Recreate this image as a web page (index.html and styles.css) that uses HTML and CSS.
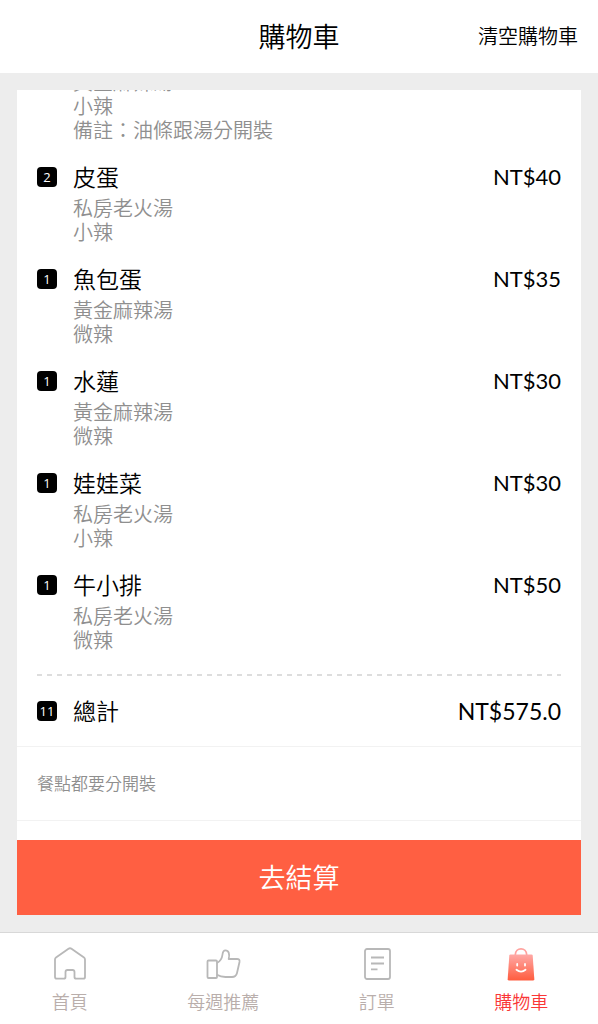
FILE: index.html
```html
<!DOCTYPE html>
<html lang="zh-Hant">
<head>
    <meta charset="UTF-8">
    <meta name="viewport" content="width=device-width, initial-scale=1.0">
    <title>購物車</title>
    <link rel="stylesheet" href="styles.css">
</head>
<body>
    <header class="header">
        <h1>購物車</h1>
        <button class="clear-btn" type="button">清空購物車</button>
    </header>

    <main class="main">
        <div class="cart">
            <!-- list stays at its end, older items are cut off on top -->
            <div class="cart-scroll">
                <ul class="items">
                    <li class="item">
                        <p class="detail">黃金麻辣湯</p>
                        <p class="detail">小辣</p>
                        <p class="detail">備註：油條跟湯分開裝</p>
                    </li>
                    <li class="item">
                        <div class="row">
                            <span class="count">2</span>
                            <h2>皮蛋</h2>
                            <span class="price">NT$40</span>
                        </div>
                        <p class="detail">私房老火湯</p>
                        <p class="detail">小辣</p>
                    </li>
                    <li class="item">
                        <div class="row">
                            <span class="count">1</span>
                            <h2>魚包蛋</h2>
                            <span class="price">NT$35</span>
                        </div>
                        <p class="detail">黃金麻辣湯</p>
                        <p class="detail">微辣</p>
                    </li>
                    <li class="item">
                        <div class="row">
                            <span class="count">1</span>
                            <h2>水蓮</h2>
                            <span class="price">NT$30</span>
                        </div>
                        <p class="detail">黃金麻辣湯</p>
                        <p class="detail">微辣</p>
                    </li>
                    <li class="item">
                        <div class="row">
                            <span class="count">1</span>
                            <h2>娃娃菜</h2>
                            <span class="price">NT$30</span>
                        </div>
                        <p class="detail">私房老火湯</p>
                        <p class="detail">小辣</p>
                    </li>
                    <li class="item">
                        <div class="row">
                            <span class="count">1</span>
                            <h2>牛小排</h2>
                            <span class="price">NT$50</span>
                        </div>
                        <p class="detail">私房老火湯</p>
                        <p class="detail">微辣</p>
                    </li>
                </ul>
                <div class="divider"></div>
                <div class="row total">
                    <span class="count">11</span>
                    <h2>總計</h2>
                    <span class="price">NT$575.0</span>
                </div>
                <p class="note">餐點都要分開裝</p>
            </div>
            <button class="checkout" type="button">去結算</button>
        </div>
    </main>

    <nav class="tabs">
        <a class="tab" href="#home">
            <svg width="36" height="36" viewBox="0 0 36 36">
                <path d="M3 13.500 Q3 12.300 4 11.600 L16.500 2.800 Q18 1.700 19.500 2.800 L32 11.600 Q33 12.300 33 13.500 V31 Q33 32.700 31.300 32.700 H24.200 Q22.500 32.700 22.500 31 V26 Q22.500 24 20.500 24 H15.500 Q13.500 24 13.500 26 V31 Q13.500 32.700 11.800 32.700 H4.700 Q3 32.700 3 31 Z"/>
            </svg>
            <span>首頁</span>
        </a>
        <a class="tab" href="#recommend">
            <svg width="36" height="36" viewBox="0 0 36 36">
                <rect x="2.500" y="14.500" width="9.500" height="17.500" rx="1"/>
                <path d="M12 17 C15 15.500 17 12.500 17.500 8.500 C17.800 5.500 18.800 4.300 20.500 4.300 C23.500 4.300 25 7.500 23.700 13 L32 12.800 Q35 12.800 34.500 16 L32 27 Q31 31 27 31 H20.500 Q15.500 31 12 28.800"/>
            </svg>
            <span>每週推薦</span>
        </a>
        <a class="tab" href="#orders">
            <svg width="36" height="36" viewBox="0 0 36 36">
                <rect x="6" y="3" width="25" height="30" rx="2"/>
                <path d="M12 11.500 H25 M12 17.500 H25 M12 23.300 H18.500"/>
            </svg>
            <span>訂單</span>
        </a>
        <a class="tab active" href="#cart">
            <svg width="36" height="36" viewBox="0 0 36 36">
                <defs>
                    <linearGradient id="bag" x1="0" y1="0" x2="0" y2="1">
                        <stop offset="0" stop-color="#ffa9a6"/>
                        <stop offset="1" stop-color="#ff5c3e"/>
                    </linearGradient>
                </defs>
                <path class="handle" d="M12.300 9 C12.300 0.800 23.700 0.800 23.700 9"/>
                <path class="bag" d="M7.500 8.500 H28.500 Q29.600 8.500 29.700 9.600 L31.300 33 Q31.400 34.600 29.900 34.600 H6.100 Q4.600 34.600 4.700 33 L6.300 9.600 Q6.400 8.500 7.500 8.500 Z"/>
                <path class="smile" d="M14.200 18 V19.500 M22 18 V19.500 M13.500 23.700 Q18 27.500 22.500 23.700"/>
            </svg>
            <span>購物車</span>
        </a>
    </nav>
</body>
</html>
```
FILE: styles.css
```css
* {
    box-sizing: border-box;
}
body {
    margin: 0;
    height: 100vh;
    display: flex;
    flex-direction: column;
    background: #ededed;
    color: #000;
    font-family: "Noto Sans CJK TC", sans-serif;
    font-weight: 350;
}
h1, h2, p, ul {
    margin: 0;
    padding: 0;
    font-weight: inherit;
}
button {
    border: none;
    padding: 0;
    font-family: inherit;
    font-weight: inherit;
    cursor: pointer;
}
.header {
    display: grid;
    grid-template-columns: 1fr auto 1fr;
    align-items: center;
    height: 73px;
    padding: 0 20px 2px;
    background: #fff;
}
.header h1 {
    grid-column: 2;
    font-size: 27px;
    line-height: 34px;
}
.clear-btn {
    justify-self: end;
    background: none;
    color: #000;
    font-size: 20px;
    line-height: 24px;
}
.main {
    flex: 1;
    min-height: 0;
    padding: 17px;
    display: flex;
}
.cart {
    flex: 1;
    display: flex;
    flex-direction: column;
    background: #fff;
}
.cart-scroll {
    flex: 1;
    min-height: 0;
    display: flex;
    flex-direction: column;
    justify-content: flex-end;
    overflow: hidden;
    padding-bottom: 19px;
}
.items {
    list-style: none;
    padding: 0 20px;
}
.item {
    padding-bottom: 17px;
}
.row {
    display: flex;
    align-items: center;
    margin-bottom: 1px;
    line-height: 36px;
}
.row h2 {
    flex: 1;
    padding-bottom: 2px;
    font-size: 23px;
    line-height: 34px;
}
.count {
    width: 20px;
    height: 20px;
    margin-right: 16px;
    border-radius: 4px;
    background: #000;
    color: #fff;
    font-family: "Open Sans", sans-serif;
    font-size: 13px;
    font-weight: 400;
    line-height: 20px;
    text-align: center;
}
.price {
    font-family: Lato, sans-serif;
    font-size: 22px;
    font-weight: 400;
}
.detail {
    padding-left: 36px;
    color: #8f8f8f;
    font-size: 20px;
    line-height: 24px;
}
.divider {
    flex: none;
    height: 2px;
    margin: 5px 20px 0;
    background: repeating-linear-gradient(to right, #ddd 0 5px, transparent 5px 10px);
}
.total {
    margin: 0;
    padding: 17px 20px;
}
.total .price {
    font-size: 23px;
}
.note {
    padding: 23px 20px 25px;
    border-top: 1px solid #f2f2f2;
    border-bottom: 1px solid #f2f2f2;
    color: #8f8f8f;
    font-size: 17px;
    line-height: 25px;
}
.checkout {
    height: 75px;
    padding-bottom: 2px;
    background: #ff5f42;
    color: #fff;
    font-size: 27px;
}
.tabs {
    display: flex;
    justify-content: space-around;
    height: 92px;
    padding: 13px 0 0 2px;
    border-top: 1px solid #d8d8d8;
    background: #fff;
}
.tab {
    display: flex;
    flex-direction: column;
    align-items: center;
    gap: 7px;
    color: #b9aeab;
    font-size: 18px;
    line-height: 24px;
    text-decoration: none;
}
.tab svg {
    fill: none;
    stroke: #b8b8b8;
    stroke-width: 1.8;
    stroke-linejoin: round;
}
.tab.active {
    color: #fa3737;
}
.tab .handle {
    stroke: #ffa29e;
}
.tab .bag {
    fill: url(#bag);
    stroke: none;
}
.tab .smile {
    stroke: #fff;
    stroke-linecap: round;
}
```
